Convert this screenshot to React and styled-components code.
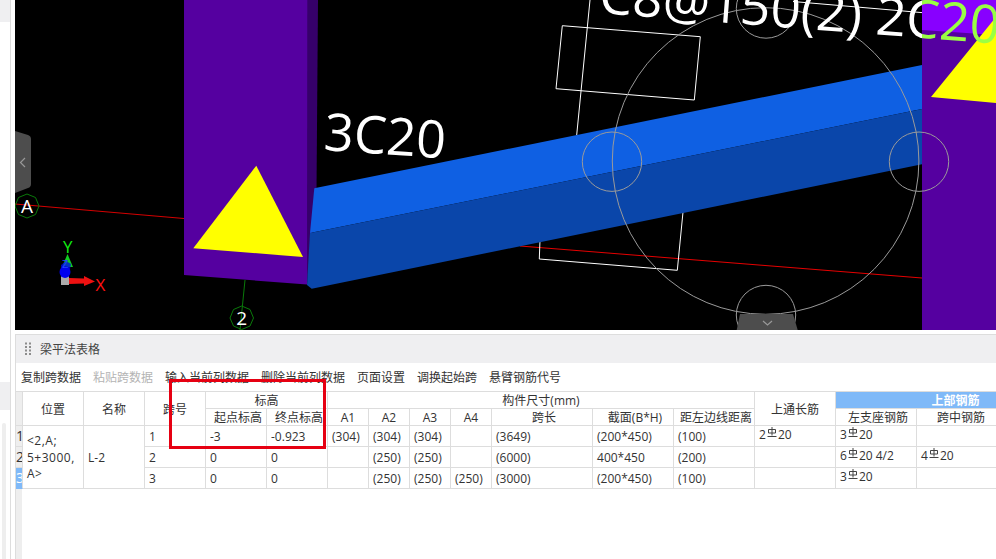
import React from 'react';
import styled, { createGlobalStyle } from 'styled-components';

const Global = createGlobalStyle`
  html, body { margin: 0; padding: 0; width: 996px; height: 559px; overflow: hidden; background: #fff; }
  #root { width: 996px; height: 559px; }
`;

const Page = styled.div`
  display: flex;
  width: 996px;
  height: 559px;
  overflow: hidden;
  background: #fff;
  color: #333;
  font-family: "Open Sans", "Noto Sans CJK SC", sans-serif;
  font-size: 12px;
`;

const SideStrip = styled.aside`
  flex: 0 0 11px;
  box-sizing: border-box;
  margin-right: 4px;
  border-right: 1px solid #ddd;
  display: flex;
  flex-direction: column;
`;
const SideTab = styled.div`
  height: ${p => p.$h}px;
  background: ${p => (p.$grey ? '#efeff1' : '#fff')};
  flex: none;
`;
const SideScroll = styled.div`
  flex: 1;
  width: 4px;
  margin: 13px 0 0 2px;
  background: #eee;
  border-radius: 2px 2px 0 0;
`;

const Main = styled.main`
  flex: 1;
  min-width: 0;
  display: flex;
  flex-direction: column;
`;

const Viewport = styled.svg`
  display: block;
  flex: none;
  width: 981px;
  height: 330px;
  background: #000;
`;
const ModelText = styled.text`
  font-family: "Open Sans", sans-serif;
  font-size: ${p => p.$size}px;
  fill: ${p => p.$fill || '#fff'};
`;

const Panel = styled.section`
  flex: 1;
  min-height: 0;
  margin-top: 4px;
  border-top: 1px solid #ddd;
  border-left: 1px solid #ddd;
  display: flex;
  flex-direction: column;
  position: relative;
`;
const PanelHeader = styled.header`
  flex: none;
  height: 28px;
  box-sizing: border-box;
  padding-left: 9px;
  display: flex;
  align-items: center;
  gap: 9px;
  background: #efeff1;
  color: #444;
`;
const Grip = styled.svg`
  width: 6px;
  height: 14px;
  flex: none;
`;
const Toolbar = styled.nav`
  flex: none;
  height: 28px;
  box-sizing: border-box;
  padding-left: 5px;
  display: flex;
  align-items: center;
  gap: 12px;
`;
const ToolButton = styled.span`
  color: ${p => (p.$disabled ? '#b4b4b4' : '#333')};
  white-space: nowrap;
`;
const TableArea = styled.div`
  flex: 1;
  min-height: 0;
  overflow: hidden;
  background: linear-gradient(#eee, #eee) 0 0 / 6px 100% no-repeat;
`;
const Grid = styled.table`
  border-collapse: separate;
  border-spacing: 0;
  table-layout: fixed;
  width: 1060px;
  border-top: 1px solid #ddd;
  background: transparent;
  font-size: 12px;
`;
const HeadRow = styled.tr`
  height: 17px;
`;
const BodyRow = styled.tr`
  height: 21px;
`;
const Th = styled.th`
  box-sizing: border-box;
  padding: 1px 0 0 ${p => (p.$nudge ? 4 : 0)}px;
  font-weight: ${p => (p.$accent ? 700 : 400)};
  line-height: 15px;
  text-align: center;
  white-space: nowrap;
  overflow: hidden;
  color: ${p => (p.$accent ? '#fff' : '#333')};
  background: ${p => (p.$accent ? '#7fb9f8' : '#fff')};
  border-right: 1px solid #ddd;
  border-bottom: 1px solid #ddd;
`;
const CornerTh = styled(Th)`
  background: #eee;
`;
const Td = styled.td`
  box-sizing: border-box;
  padding: ${p => (p.$raised ? '0 0 3px 4px' : '0 0 0 4px')};
  line-height: 17px;
  white-space: nowrap;
  overflow: hidden;
  background: #fff;
  border-right: 1px solid #ddd;
  border-bottom: 1px solid #ddd;
`;
const PositionTd = styled(Td)`
  padding: 2px 0 0 4px;
  line-height: 16.5px;
  letter-spacing: 0.5px;
`;
const RowNo = styled.td`
  box-sizing: border-box;
  padding: 0;
  text-align: center;
  font-size: 14px;
  line-height: 16px;
  overflow: hidden;
  color: ${p => (p.$active ? '#fff' : '#333')};
  background: ${p => (p.$active ? '#7fb9f8' : '#eee')};
  border-right: 1px solid #ddd;
  border-bottom: 1px solid ${p => (p.$active ? '#7fb9f8' : '#ddd')};
`;
const Highlight = styled.div`
  position: absolute;
  left: 153px;
  top: 44px;
  width: 157px;
  height: 70px;
  box-sizing: border-box;
  border: 3px solid #e60012;
  pointer-events: none;
`;
const RebarMark = styled.svg`
  display: inline-block;
  width: 10px;
  height: 11px;
  margin: 0 1px;
  vertical-align: 1px;
`;

const Rebar = () => (
  <RebarMark viewBox="0 0 10 11" fill="none" stroke="#444" strokeWidth="1">
    <path d="M1.5 2.5h7v3.5h-7zM5 0v8.5M.5 9.5h9" />
  </RebarMark>
);

const Bar = ({ n, tail }) => (
  <>
    {n}
    <Rebar />
    20{tail}
  </>
);

const WIDTHS = [7, 61, 61, 61, 61, 61, 41, 41, 41, 41, 101, 81, 81, 81, 81, 85, 74];
const TOOLS = ['复制跨数据', '粘贴跨数据', '输入当前列数据', '删除当前列数据', '页面设置', '调换起始跨', '悬臂钢筋代号'];
const ROWS = [
  { no: 1, start: '-3', end: '-0.923', a: ['(304)', '(304)', '(304)', ''], len: '(3649)', sec: '(200*450)', off: '(100)', top: <Bar n="2" />, left: <Bar n="3" />, mid: null },
  { no: 2, start: '0', end: '0', a: ['', '(250)', '(250)', ''], len: '(6000)', sec: '400*450', off: '(200)', top: null, left: <Bar n="6" tail=" 4/2" />, mid: <Bar n="4" /> },
  { no: 3, start: '0', end: '0', a: ['', '(250)', '(250)', '(250)'], len: '(3000)', sec: '(200*450)', off: '(100)', top: null, left: <Bar n="3" />, mid: null },
];

const LINE = { stroke: '#fff', strokeWidth: 1, fill: 'none' };
const RING = { stroke: '#9a9a9a', strokeWidth: 1, fill: 'none' };

const Scene = () => (
  <Viewport viewBox="15 0 981 330">
    <defs>
      {/* the long label changes colour where it passes over the right column */}
      <pattern
        id="labelInk"
        patternUnits="userSpaceOnUse"
        x="0"
        y="-100"
        width="1100"
        height="300"
        patternTransform="rotate(-4.4) translate(-598 -13)"
      >
        <rect x="0" y="-100" width="1100" height="400" fill="#fff" />
        <rect x="922" y="0" width="178" height="200" fill="#99ff44" />
        <polygon points="931,97 996,17 996,103" fill="#0000ee" />
      </pattern>
    </defs>
    {/* grid lines */}
    <path d="M15 204 L184 218.5" stroke="#d40000" strokeWidth="1" />
    <path d="M520 246 L922 278" stroke="#e60000" strokeWidth="1" />
    <path d="M245 280 L240 330" stroke="#0a7a0a" strokeWidth="1" />

    {/* wire frames */}
    <polygon points="562.3,25.7 700.3,36.7 694.3,100 556,88.7" {...LINE} />
    <path d="M590 0 L576.7 135" {...LINE} />
    <path d="M540 240 L539.3 259 L677.3 270.3 L683 212" {...LINE} />
    <path d="M793 1.5 L930 13.3 L931.5 0" {...LINE} />

    {/* left column */}
    <polygon points="307,0 318,0 316.5,190 307,285" fill="#36006a" />
    <polygon points="184,0 307.3,0 307,284.5 184,275" fill="#5500a0" />
    <polygon points="256.3,165.7 193.3,248.3 303,257" fill="#ffff00" />

    {/* beam */}
    <polygon points="314.3,188.3 922,65 922,109 310,233" fill="#0f60e3" />
    <polygon points="310,233 922,109 922,164.3 311.7,288.7 307,285" fill="#0a46aa" />

    {/* right column */}
    <rect x="922" y="0" width="74" height="330" fill="#5500a0" />
    <polygon points="922,0 996,0 996,35 922,30" fill="#8800ff" />
    <polygon points="931,97 996,17 996,103" fill="#ffff00" />

    {/* rings */}
    <circle cx="765.6" cy="161" r="153.3" {...RING} />
    <circle cx="612" cy="161.7" r="29.7" {...RING} />
    <circle cx="919" cy="161.7" r="29.7" {...RING} />
    <circle cx="766" cy="8.5" r="29.7" {...RING} />
    <circle cx="766" cy="315" r="29.7" {...RING} />

    {/* labels */}
    <ModelText $size={52} x="0" y="0" transform="translate(323 150) rotate(4)">3C20</ModelText>
    <ModelText $size={53} $fill="url(#labelInk)" x="0" y="0" transform="translate(598 13) rotate(4.4)">
      C8@150(2) 2C20
    </ModelText>

    {/* axis bubbles */}
    <polygon points="27,194 35.5,197.5 39,206 35.5,214.5 27,218 18.5,214.5 15,206 18.5,197.5" fill="none" stroke="#0a7a0a" />
    <ModelText $size={19} x="27" y="212.5" textAnchor="middle">A</ModelText>
    <polygon points="241.7,306 250,309.5 253.5,318 250,326 241.7,329.5 233.5,326 230,318 233.5,309.5" fill="none" stroke="#0a7a0a" />
    <ModelText $size={19} x="241.7" y="325" textAnchor="middle">2</ModelText>

    {/* axis gizmo */}
    <rect x="61" y="276" width="8" height="9" fill="#aaa" />
    <polygon points="69,278 84,278.5 84,276 95,281.5 84,286 84,283.5 69,284" fill="#ee1111" />
    <polygon points="67.5,254 73,267 62,267" fill="#11cc22" />
    <ellipse cx="65" cy="272" rx="5.5" ry="6" fill="#0000ee" />
    <polygon points="61,265 66,261 71,264 70,269 61,271" fill="#0000ee" opacity="0.75" />
    <ModelText $size={17} $fill="#ff1111" x="95.5" y="291">X</ModelText>
    <ModelText $size={17} $fill="#11ee11" x="63" y="253">Y</ModelText>
    <ModelText $size={11} $fill="#2244ff" x="62" y="268">Z</ModelText>

    {/* collapse handles */}
    <path d="M15 131 L28 135 Q31 136 31 139 L31 184 Q31 187 28 188 L15 193 Z" fill="#4d4d4d" />
    <path d="M25 158 L20.5 162.5 L25 167" fill="none" stroke="#999" strokeWidth="1.2" />
    <path d="M736.7 330 L740 314 L793 314 L797.7 330 Z" fill="#4d4d4d" />
    <path d="M763 321 L767.5 325 L772 321" fill="none" stroke="#999" strokeWidth="1.2" />
  </Viewport>
);

export default function App() {
  return (
    <Page>
      <Global />
      <SideStrip>
        <SideTab $h={22} $grey />
        <SideTab $h={360} />
        <SideTab $h={28} $grey />
        <SideScroll />
      </SideStrip>
      <Main>
        <Scene />
        <Panel>
          <PanelHeader>
            <Grip viewBox="0 0 6 14" fill="#8c8c8c">
              {[0.5, 4, 7.5, 11].flatMap(y => [0, 4].map(x => <rect key={`${x}-${y}`} x={x} y={y} width="2" height="2" />))}
            </Grip>
            梁平法表格
          </PanelHeader>
          <Toolbar>
            {TOOLS.map((t, i) => (
              <ToolButton key={t} $disabled={i === 1}>{t}</ToolButton>
            ))}
          </Toolbar>
          <TableArea>
            <Grid>
              <colgroup>
                {WIDTHS.map((w, i) => <col key={i} width={w} />)}
              </colgroup>
              <thead>
                <HeadRow>
                  <CornerTh rowSpan={2} />
                  <Th rowSpan={2}>位置</Th>
                  <Th rowSpan={2}>名称</Th>
                  <Th rowSpan={2}>跨号</Th>
                  <Th colSpan={2}>标高</Th>
                  <Th colSpan={7}>构件尺寸(mm)</Th>
                  <Th rowSpan={2}>上通长筋</Th>
                  <Th colSpan={3} $accent>上部钢筋</Th>
                </HeadRow>
                <HeadRow>
                  <Th $nudge>起点标高</Th>
                  <Th $nudge>终点标高</Th>
                  <Th>A1</Th>
                  <Th>A2</Th>
                  <Th>A3</Th>
                  <Th>A4</Th>
                  <Th $nudge>跨长</Th>
                  <Th $nudge>截面(B*H)</Th>
                  <Th $nudge>距左边线距离</Th>
                  <Th $nudge>左支座钢筋</Th>
                  <Th $nudge>跨中钢筋</Th>
                  <Th />
                </HeadRow>
              </thead>
              <tbody>
                {ROWS.map((r, i) => (
                  <BodyRow key={r.no}>
                    <RowNo $active={r.no === 3}>{r.no}</RowNo>
                    {i === 0 && (
                      <PositionTd rowSpan={3}>
                        &lt;2,A;<br />5+3000,<br />A&gt;
                      </PositionTd>
                    )}
                    {i === 0 && <Td rowSpan={3}>L-2</Td>}
                    <Td>{r.no}</Td>
                    <Td>{r.start}</Td>
                    <Td>{r.end}</Td>
                    {r.a.map((v, k) => <Td key={k}>{v}</Td>)}
                    <Td>{r.len}</Td>
                    <Td>{r.sec}</Td>
                    <Td>{r.off}</Td>
                    <Td $raised>{r.top}</Td>
                    <Td $raised>{r.left}</Td>
                    <Td $raised>{r.mid}</Td>
                    <Td />
                  </BodyRow>
                ))}
              </tbody>
            </Grid>
          </TableArea>
          <Highlight />
        </Panel>
      </Main>
    </Page>
  );
}
